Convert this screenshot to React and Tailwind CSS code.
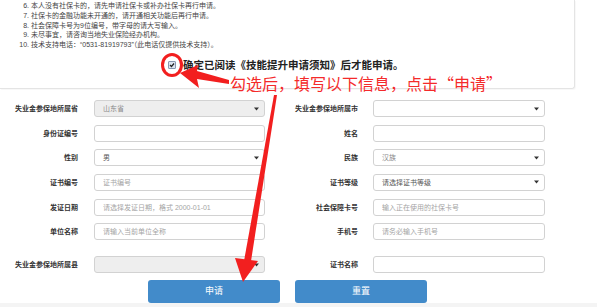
import React from 'react';

const NOTICES = [
  '本人没有社保卡的，请先申请社保卡或补办社保卡再行申请。',
  '社保卡的金融功能未开通的，请开通相关功能后再行申请。',
  '社会保障卡号为9位编号，带字母的请大写输入。',
  '未尽事宜，请咨询当地失业保险经办机构。',
  '技术支持电话：“0531-81919793”（此电话仅提供技术支持）。',
];

const ROWS = [
  [
    { label: '失业金参保地所属省', type: 'select', value: '山东省', disabled: true },
    { label: '失业金参保地所属市', type: 'select' },
  ],
  [
    { label: '身份证编号', type: 'input' },
    { label: '姓名', type: 'input' },
  ],
  [
    { label: '性别', type: 'select', value: '男' },
    { label: '民族', type: 'select', value: '汉族', muted: true },
  ],
  [
    { label: '证书编号', type: 'input', placeholder: '证书编号' },
    { label: '证书等级', type: 'select', value: '请选择证书等级' },
  ],
  [
    { label: '发证日期', type: 'input', placeholder: '请选择发证日期，格式 2000-01-01' },
    { label: '社会保障卡号', type: 'input', placeholder: '输入正在使用的社保卡号' },
  ],
  [
    { label: '单位名称', type: 'input', placeholder: '请输入当前单位全称' },
    { label: '手机号', type: 'input', placeholder: '请务必输入手机号' },
  ],
];

const LAST_ROW = [
  { label: '失业金参保地所属县', type: 'select', disabled: true },
  { label: '证书名称', type: 'input' },
];

const Caret = () => (
  <svg width="5" height="4" viewBox="0 0 5 4" className="shrink-0">
    <path d="M0 0.5 L5 0.5 L2.5 3.5 Z" fill="#333" />
  </svg>
);

const Control = ({ field, width }) => {
  const base = `${width} h-[17px] border border-[#d2d2d2] rounded-[3px] flex items-center text-[7px] leading-none`;
  if (field.type === 'select') {
    return (
      <div className={`${base} pl-[8px] pr-[5px] ${field.disabled ? 'bg-[#eeeeee]' : 'bg-white'}`}>
        <span className={`flex-1 ${field.muted || field.disabled ? 'text-[#888]' : 'text-[#555]'}`}>
          {field.value}
        </span>
        <Caret />
      </div>
    );
  }
  return (
    <input
      type="text"
      readOnly
      placeholder={field.placeholder}
      className={`${base} bg-white px-[8px] text-[#555] placeholder:text-[#a5a5a5] outline-none`}
    />
  );
};

const Field = ({ field, side }) => (
  <div className={`flex items-center ${side === 'left' ? 'w-[280px]' : ''}`}>
    <label className="w-[78px] text-right text-[7px] font-bold text-[#333] leading-none">
      {field.label}
    </label>
    {side === 'left' ? (
      <div className="ml-[16px]">
        <Control field={field} width="w-[171px]" />
      </div>
    ) : (
      <div className="ml-[15px]">
        <Control field={field} width="w-[172px]" />
      </div>
    )}
  </div>
);

const App = () => {
  return (
    <div className="relative w-[597px] h-[307px] overflow-hidden bg-white font-[family-name:'Liberation_Sans','Noto_Sans_CJK_SC',sans-serif]">
      {/* notice card */}
      <div className="w-[575px] h-[89px] border-r border-b border-[#e4e4e4] rounded-br-[3px] shadow-[1px_1px_1px_rgba(0,0,0,0.03)]">
        <ol start={6} className="list-decimal pl-[31px] pt-[1px] text-[7px] leading-[9.8px] text-[#444]">
          {NOTICES.map((n) => (
            <li key={n}>{n}</li>
          ))}
        </ol>
        <div className="flex items-center mt-[8px] pl-[168px] h-[14px]">
          <div className="w-[8px] h-[8px] border border-[#8a98b0] bg-[#dce4f0] rounded-[1px] flex items-center justify-center">
            <svg width="6" height="6" viewBox="0 0 6 6">
              <path d="M1 3 L2.5 4.5 L5 1.5" stroke="#222" strokeWidth="1.2" fill="none" />
            </svg>
          </div>
          <span className="ml-[7px] text-[10.5px] font-bold text-[#222] leading-none">
            确定已阅读《技能提升申请须知》后才能申请。
          </span>
        </div>
      </div>

      {/* form */}
      <div className="mt-[11px] flex flex-col gap-y-[7.66px]">
        {ROWS.map(([l, r]) => (
          <div key={l.label} className="flex">
            <Field field={l} side="left" />
            <Field field={r} side="right" />
          </div>
        ))}
      </div>
      <div className="mt-[16px] flex">
        <Field field={LAST_ROW[0]} side="left" />
        <Field field={LAST_ROW[1]} side="right" />
      </div>

      <div className="mt-[7px] flex pl-[148px] gap-[15px]">
        <button className="w-[132px] h-[23px] rounded-[3px] bg-[#428bca] text-white text-[9px]">申请</button>
        <button className="w-[132px] h-[23px] rounded-[3px] bg-[#428bca] text-white text-[9px]">重置</button>
      </div>
      <div className="h-[10px] bg-[#f4f4f4]" />

      {/* red annotations */}
      <svg className="absolute inset-0 pointer-events-none" width="597" height="307" viewBox="0 0 597 307">
        <ellipse cx="172" cy="65" rx="9.5" ry="10.5" fill="none" stroke="#f21f1f" strokeWidth="3" />
        <polygon points="180,73 198,65 197,71 229,80 229,84 197,79 199,88" fill="#f21f1f" />
        <polygon points="274,95 277,95 251,261 244,261" fill="#f21f1f" />
        <polygon points="235,258 258,261 243,282" fill="#f21f1f" />
      </svg>
      <div className="absolute left-[230px] top-[74px] text-[16px] leading-[18px] text-[#f42a2a] whitespace-nowrap font-[family-name:'Noto_Sans_CJK_SC',sans-serif]">
        勾选后，填写以下信息，点击“申请”
      </div>
    </div>
  );
};

export default App;
